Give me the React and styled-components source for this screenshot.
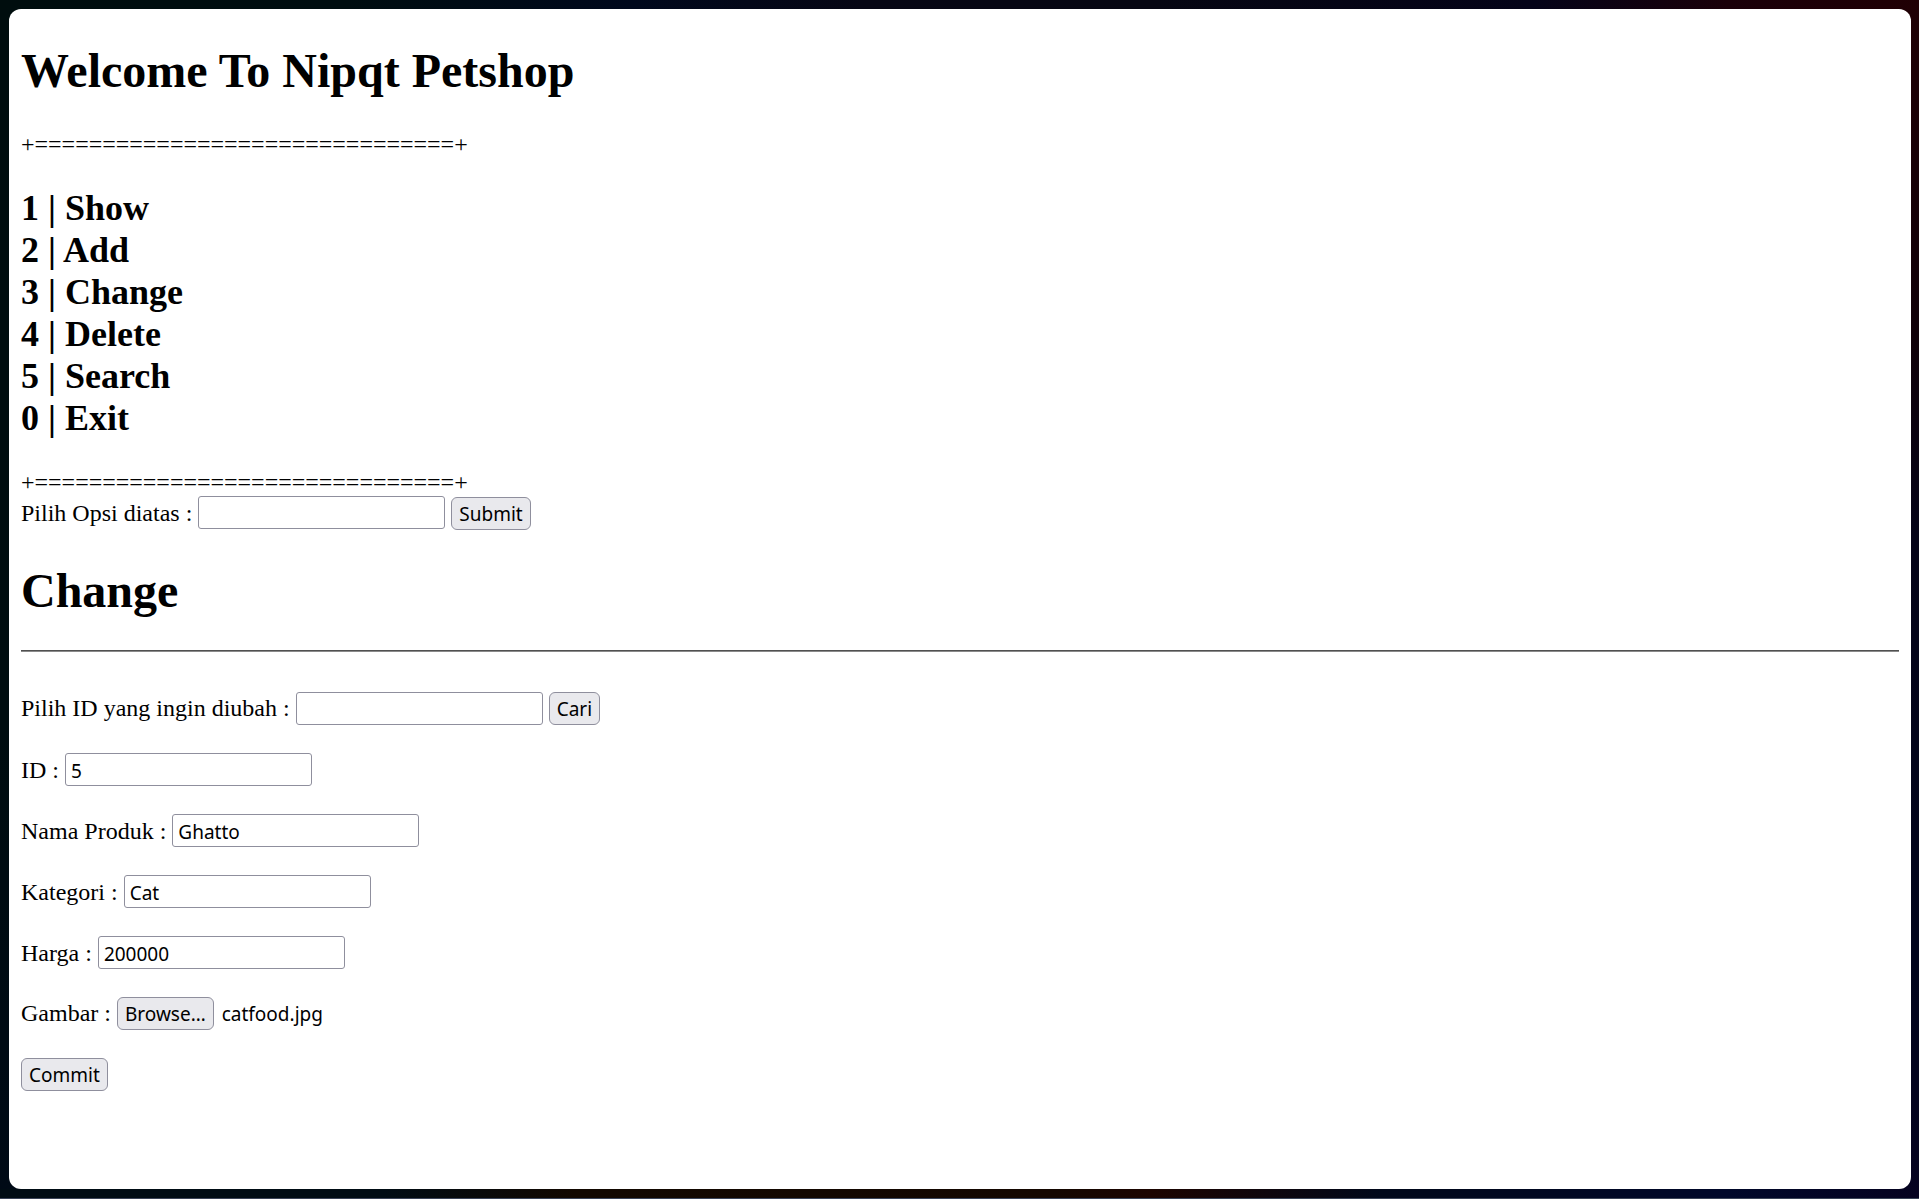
import React, { useRef, useState } from "react";
import styled, { createGlobalStyle } from "styled-components";

const GlobalStyle = createGlobalStyle`
  *, *::before, *::after { box-sizing: border-box; }
  body {
    margin: 0;
    color: #000;
    font: 24px/28px "Liberation Serif", "Times New Roman", serif;
  }
`;

const Page = styled.div`
  display: flex;
  min-height: 100vh;
  padding: 9px 8px 9px 9px;
  border-bottom: 1px solid #3a4458;
  background:
    linear-gradient(90deg, #000d0e 0%, #000d10 18%, #00081c 33%, #060614 45%, #060612 60%, #040318 80%, #1a0009 90%, #200004 100%) top / 100% 9px no-repeat,
    linear-gradient(90deg, #000c14 0%, #000c14 20%, #120800 30%, #140700 55%, #1c0400 60%, #00081a 72%, #00082a 90%, #050220 100%) bottom / 100% 9px no-repeat,
    linear-gradient(180deg, #000d0e 0%, #000d10 60%, #000a16 100%) left / 50% 100% no-repeat,
    linear-gradient(180deg, #200004 0%, #100008 28%, #040318 45%, #00041c 80%, #050220 100%) right / 50% 100% no-repeat;
`;

const Panel = styled.main`
  flex: 1;
  min-width: 0;
  padding: 34px 12px;
  border-radius: 12px;
  background: #fff;
`;

const Title = styled.h1`
  margin: 0 0 31px;
  font-size: 48px;
  line-height: 56px;
`;

const Divider = styled.div`
  white-space: nowrap;
`;

const Menu = styled.ul`
  margin: 29px 0;
  padding: 0;
  list-style: none;
  font-size: 36px;
  font-weight: bold;
  line-height: 42px;
`;

const Form = styled.form`
  display: flex;
  flex-direction: column;
  gap: 28px;
`;

const Row = styled.div`
  display: flex;
  flex-wrap: wrap;
  align-items: baseline;
  gap: 6px;
`;

const TextInput = styled.input`
  width: 247px;
  height: 33px;
  padding: 3px 5px 1px;
  border: 1px solid #8f8f9d;
  border-radius: 3px;
  background: #fff;
  color: #000;
  font: 19px/27px "Noto Sans", sans-serif;
`;

const Button = styled.button`
  height: 33px;
  padding: 3px 7px 1px;
  border: 1px solid #8f8f9d;
  border-radius: 6px;
  background: #e9e9ed;
  color: #000;
  font: 19px/27px "Noto Sans", sans-serif;
`;

const FileInput = styled.input`
  display: none;
`;

const FileName = styled.output`
  margin-left: 2px;
  font: 19px/27px "Noto Sans", sans-serif;
`;

const Rule = styled.hr`
  margin: 0 0 40px;
  border: 0;
  border-top: 1px solid #505050;
  border-bottom: 1px solid #8a8a8a;
`;

const Section = styled.section`
  padding-top: 33px;
`;

const options = [
  [1, "Show"],
  [2, "Add"],
  [3, "Change"],
  [4, "Delete"],
  [5, "Search"],
  [0, "Exit"],
];

const line = "+" + "=".repeat(31) + "+";

function Field({ id, label, value = "", children }) {
  return (
    <Row>
      <label htmlFor={id}>{label} :</label>
      <TextInput id={id} type="text" defaultValue={value} />
      {children}
    </Row>
  );
}

function FileField({ id, label, initialName }) {
  const picker = useRef(null);
  const [name, setName] = useState(initialName);
  return (
    <Row>
      <label htmlFor={id}>{label} :</label>
      <Button type="button" onClick={() => picker.current.click()}>Browse…</Button>
      <FileInput
        ref={picker}
        id={id}
        type="file"
        onChange={(e) => e.target.files[0] && setName(e.target.files[0].name)}
      />
      <FileName htmlFor={id}>{name}</FileName>
    </Row>
  );
}

export default function App() {
  const stay = (e) => e.preventDefault();
  return (
    <>
      <GlobalStyle />
      <Page>
        <Panel>
          <Title>Welcome To Nipqt Petshop</Title>
          <Divider>{line}</Divider>
          <Menu>
            {options.map(([key, name]) => (
              <li key={key}>{key} | {name}</li>
            ))}
          </Menu>
          <Divider>{line}</Divider>
          <Form onSubmit={stay}>
            <Field id="option" label="Pilih Opsi diatas">
              <Button>Submit</Button>
            </Field>
          </Form>
          <Section>
            <Title as="h2">Change</Title>
            <Rule />
            <Form onSubmit={stay}>
              <Field id="lookup" label="Pilih ID yang ingin diubah">
                <Button type="button">Cari</Button>
              </Field>
              <Field id="product-id" label="ID" value="5" />
              <Field id="product-name" label="Nama Produk" value="Ghatto" />
              <Field id="category" label="Kategori" value="Cat" />
              <Field id="price" label="Harga" value="200000" />
              <FileField id="image" label="Gambar" initialName="catfood.jpg" />
              <Row>
                <Button>Commit</Button>
              </Row>
            </Form>
          </Section>
        </Panel>
      </Page>
    </>
  );
}
